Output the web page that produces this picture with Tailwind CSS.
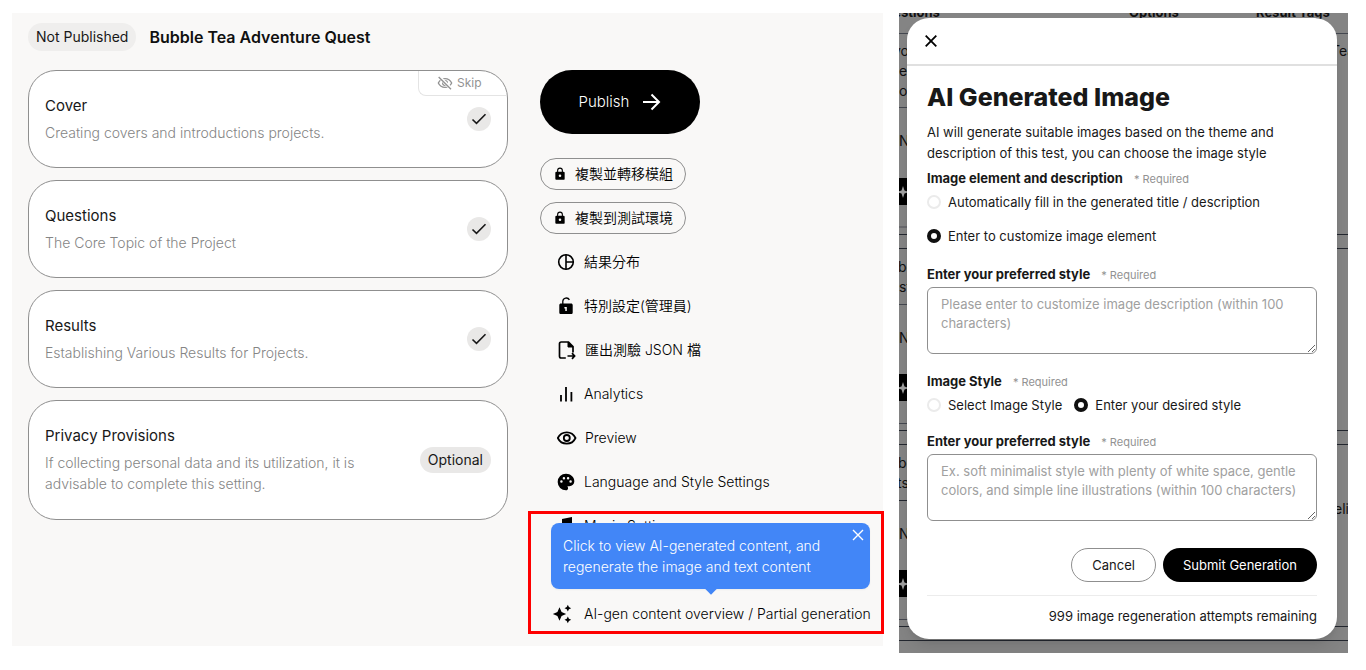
<!DOCTYPE html>
<html lang="en">
  <head>
    <meta charset="UTF-8" />
    <meta name="viewport" content="width=device-width, initial-scale=1.0" />
    <script src="https://cdn.jsdelivr.net/npm/@tailwindcss/browser@4"></script>
    <title>Bubble Tea Adventure Quest</title>
  </head>
  <body
    class="bg-white text-[#181818] text-sm font-[Inter,'Noto_Sans_CJK_TC',sans-serif]"
  >
    <div class="flex items-start gap-4 pt-[13px] pl-3 pr-[18px]">
      <!-- project overview -->
      <main class="relative flex-1 min-w-0 bg-[#f9f8f7] px-4 pt-[10px] h-[633px]">
        <header class="flex items-center gap-[13px] h-7">
          <span class="bg-[#efeeed] rounded-full px-2 leading-7">Not Published</span>
          <h1 class="text-base font-semibold text-[#101010]">Bubble Tea Adventure Quest</h1>
        </header>

        <div class="flex gap-8 mt-[19px]">
          <div class="flex flex-col gap-3 w-[480px] shrink-0">
            <section
              class="relative flex items-center justify-between bg-white border border-[#8f8f8f] rounded-[28px] px-4 h-[98px] overflow-hidden"
            >
              <div class="pb-[2px]">
                <h2 class="text-[15px] leading-6">Cover</h2>
                <p class="text-[#858585] font-light leading-[21px] mt-1">Creating covers and introductions projects.</p>
              </div>
              <button
                class="absolute top-0 right-0 flex items-center gap-1 w-[89px] h-[25px] pl-[18px] border-l border-b border-[#e4e4e4] rounded-bl-lg text-xs text-[#929292]"
              >
                <svg class="w-4 h-4" viewBox="0 0 24 24" fill="none" stroke="currentColor" stroke-width="2">
                  <path d="M2 12c2-4.200 5.500-6.500 10-6.500S20 7.800 22 12c-2 4.200-5.500 6.500-10 6.500S4 16.200 2 12z" />
                  <circle cx="12" cy="12" r="3.500" />
                  <path d="M3 2.500 21.500 21" stroke="#fff" stroke-width="5" />
                  <path d="M2.500 3 21 21.500" />
                </svg>
                Skip
              </button>
              <span class="flex items-center justify-center w-6 h-6 rounded-full bg-[#e9e8e7]">
                <svg class="w-4 h-4" viewBox="0 0 16 16" fill="none" stroke="#181818" stroke-width="1.600">
                  <path d="M1.500 8.500 5.500 12.300 14.500 3.300" />
                </svg>
              </span>
            </section>

            <section
              class="flex items-center justify-between bg-white border border-[#8f8f8f] rounded-[28px] px-4 h-[98px]"
            >
              <div class="pb-[2px]">
                <h2 class="text-[15px] leading-6">Questions</h2>
                <p class="text-[#858585] font-light leading-[21px] mt-1">The Core Topic of the Project</p>
              </div>
              <span class="flex items-center justify-center w-6 h-6 rounded-full bg-[#e9e8e7]">
                <svg class="w-4 h-4" viewBox="0 0 16 16" fill="none" stroke="#181818" stroke-width="1.600">
                  <path d="M1.500 8.500 5.500 12.300 14.500 3.300" />
                </svg>
              </span>
            </section>

            <section
              class="flex items-center justify-between bg-white border border-[#8f8f8f] rounded-[28px] px-4 h-[98px]"
            >
              <div class="pb-[2px]">
                <h2 class="text-[15px] leading-6">Results</h2>
                <p class="text-[#858585] font-light leading-[21px] mt-1">Establishing Various Results for Projects.</p>
              </div>
              <span class="flex items-center justify-center w-6 h-6 rounded-full bg-[#e9e8e7]">
                <svg class="w-4 h-4" viewBox="0 0 16 16" fill="none" stroke="#181818" stroke-width="1.600">
                  <path d="M1.500 8.500 5.500 12.300 14.500 3.300" />
                </svg>
              </span>
            </section>

            <section
              class="flex items-center justify-between bg-white border border-[#8f8f8f] rounded-[28px] px-4 h-[120px]"
            >
              <div class="w-[340px] pb-[2px]">
                <h2 class="text-[15px] leading-6">Privacy Provisions</h2>
                <p class="text-[#858585] font-light leading-[21px] mt-1">
                  If collecting personal data and its utilization, it is advisable to complete this setting.
                </p>
              </div>
              <span class="bg-[#e9e8e7] rounded-full px-2 leading-[26px]">Optional</span>
            </section>
          </div>

          <nav class="flex flex-col items-start gap-3 text-black font-[350] whitespace-nowrap">
            <button
              class="flex items-center justify-center gap-3 w-40 h-16 mb-3 rounded-full bg-black text-white text-[15px]"
            >
              Publish
              <svg class="w-5 h-5" viewBox="0 0 20 20" fill="none" stroke="currentColor" stroke-width="2">
                <path d="M2 10h15.500M10.500 2.500 18 10l-7.500 7.500" />
              </svg>
            </button>
            <button class="flex items-center gap-2 h-8 px-3 rounded-full border border-[#8f8f8f]">
              <svg class="w-[14px] h-[14px]" viewBox="0 0 24 24" fill="currentColor">
                <path d="M18 8h-1V6A5 5 0 0 0 7 6v2H6a2 2 0 0 0-2 2v10c0 1.100.9 2 2 2h12a2 2 0 0 0 2-2V10a2 2 0 0 0-2-2zm-6 9.300a2.200 2.200 0 1 1 0-4.400 2.200 2.200 0 0 1 0 4.400zM15.100 8H8.900V6a3.100 3.100 0 0 1 6.200 0v2z" />
              </svg>
              複製並轉移模組
            </button>
            <button class="flex items-center gap-2 h-8 px-3 rounded-full border border-[#8f8f8f]">
              <svg class="w-[14px] h-[14px]" viewBox="0 0 24 24" fill="currentColor">
                <path d="M18 8h-1V6A5 5 0 0 0 7 6v2H6a2 2 0 0 0-2 2v10c0 1.100.9 2 2 2h12a2 2 0 0 0 2-2V10a2 2 0 0 0-2-2zm-6 9.300a2.200 2.200 0 1 1 0-4.400 2.200 2.200 0 0 1 0 4.400zM15.100 8H8.900V6a3.100 3.100 0 0 1 6.200 0v2z" />
              </svg>
              複製到測試環境
            </button>
            <a href="#" class="flex items-center gap-2 h-8 pl-4">
              <svg class="w-5 h-5" viewBox="0 0 20 20" fill="none" stroke="currentColor" stroke-width="1.600">
                <circle cx="10" cy="10" r="7.300" />
                <path d="M10 2.500v15M10 10h7.500" />
              </svg>
              結果分布
            </a>
            <a href="#" class="flex items-center gap-2 h-8 pl-4">
              <svg class="w-5 h-5" viewBox="0 0 20 20" fill="none">
                <path d="M6.800 9V5.200a3.500 3.500 0 0 1 6.600-1.300" stroke="currentColor" stroke-width="1.300" />
                <path fill="currentColor" fill-rule="evenodd" d="M4.900 7.500h10.200c.9 0 1.600.7 1.600 1.600v7.300c0 .9-.7 1.600-1.600 1.600H4.900c-.9 0-1.600-.7-1.600-1.600V9.100c0-.9.7-1.600 1.600-1.600zM8.400 11v1.400h.9V15h1.500v-4z" />
              </svg>
              特別設定(管理員)
            </a>
            <a href="#" class="flex items-center gap-2 h-8 pl-[17px]">
              <svg class="w-5 h-5" viewBox="0 0 20 20" fill="none" stroke="currentColor" stroke-width="1.700">
                <path d="M8.800 18H4.200a1.700 1.700 0 0 1-1.700-1.700V3.700C2.500 2.800 3.300 2 4.200 2h7.300L16 6.500v6" />
                <path d="M11 2v5h5z" fill="currentColor" stroke-width="1" />
                <path d="M10.500 16h7M15 13.200l2.600 2.800-2.600 2.800" />
              </svg>
              匯出測驗 JSON 檔
            </a>
            <a href="#" class="flex items-center gap-2 h-8 pl-4">
              <svg class="w-5 h-5" viewBox="0 0 20 20" fill="none" stroke="currentColor" stroke-width="1.800">
                <path d="M5 11v6.500M10 3v14.500M15.400 8v9.500" />
              </svg>
              Analytics
            </a>
            <a href="#" class="flex items-center gap-2 h-8 pl-[17px]">
              <svg class="w-5 h-5" viewBox="0 0 20 20" fill="none" stroke="currentColor" stroke-width="1.800">
                <path d="M.8 10c1.700-3.600 5-5.700 9-5.700s7 2.100 8.700 5.700c-1.700 3.600-4.700 5.700-8.700 5.700S2.500 13.600.8 10z" />
                <circle cx="9.800" cy="10" r="3" />
              </svg>
              Preview
            </a>
            <a href="#" class="flex items-center gap-2 h-8 pl-4">
              <svg class="w-5 h-5" viewBox="0 0 24 24" fill="currentColor">
                <path d="M12 2a10 10 0 1 0 0 20c1.400 0 2.500-1.100 2.500-2.500 0-.6-.2-1.200-.6-1.700-.1-.1-.1-.2-.1-.3 0-.3.200-.5.500-.5H16a6 6 0 0 0 6-6C22 6 17.500 2 12 2zM6.500 13a1.500 1.500 0 1 1 0-3 1.500 1.500 0 0 1 0 3zm3-4a1.500 1.500 0 1 1 0-3 1.500 1.500 0 0 1 0 3zm5 0a1.500 1.500 0 1 1 0-3 1.500 1.500 0 0 1 0 3zm3 4a1.500 1.500 0 1 1 0-3 1.500 1.500 0 0 1 0 3z" />
              </svg>
              Language and Style Settings
            </a>
            <a href="#" class="flex items-center gap-2 h-8 pl-4">
              <svg class="w-5 h-5" viewBox="0 0 20 20" fill="currentColor">
                <path d="M6 3l10-2v12.500a2.700 2.700 0 1 1-2-2.500V7L8 8.200v7.300A2.700 2.700 0 1 1 6 13z" />
              </svg>
              Music Settings
            </a>
            <div class="relative mt-11">
              <a href="#" class="flex items-center gap-3 h-8 pl-3">
                <svg class="w-5 h-5" viewBox="0 0 24 24" fill="currentColor">
                  <path d="m19 9 1.300-2.700L23 5l-2.700-1.300L19 1l-1.300 2.700L15 5l2.700 1.300zM19 15l-1.300 2.700L15 19l2.700 1.300L19 23l1.300-2.700L23 19l-2.700-1.300zM11.500 9.500 9 4 6.500 9.500 1 12l5.500 2.500L9 20l2.500-5.500L17 12z" />
                </svg>
                AI-gen content overview / Partial generation
              </a>
              <div
                role="tooltip"
                class="absolute bottom-[41px] left-[11px] w-[319px] h-[66px] bg-[#4286f7] text-white rounded-lg px-3 py-3 font-light leading-[21px] whitespace-normal shadow-xs"
              >
                <p>Click to view AI-generated content, and regenerate the image and text content</p>
                <button aria-label="Dismiss" class="absolute top-[6px] right-[6px]">
                  <svg class="w-3 h-3" viewBox="0 0 12 12" fill="none" stroke="currentColor" stroke-width="1.400">
                    <path d="M1 1l10 10M11 1 1 11" />
                  </svg>
                </button>
                <span class="absolute -bottom-1 left-1/2 w-2 h-2 -ml-1 rotate-45 bg-[#4286f7]"></span>
              </div>
            </div>
          </nav>
        </div>

        <!-- highlight frame -->
        <div class="absolute -right-px bottom-3 w-[356px] h-[123px] border-3 border-[#fe0000] pointer-events-none"></div>
      </main>

      <!-- image generation dialog over the dimmed question table -->
      <aside class="relative w-[449px] shrink-0 h-[640px] bg-[#848484] overflow-hidden">
        <div aria-hidden="true" class="absolute inset-0 text-[#101010] leading-5 whitespace-nowrap">
          <div class="relative h-[21px] border-b border-[#44474f] text-[13px] font-bold leading-4 overflow-hidden">
            <span class="absolute -top-[9px] -left-6">Questions</span>
            <span class="absolute -top-[9px] left-[230px]">Options</span>
            <span class="absolute -top-[9px] left-[357px]">Result Tags</span>
          </div>
          <div class="flex justify-between h-[201px] border-b border-[#23272f] mb-[13px]">
            <div class="w-10 h-[194px] border-b-2 border-[#6a6a6e]">
              <div class="h-[74px] pt-[7px] border-b border-[#44474f]">
                <p class="-ml-[6px]">you</p>
                <p>er</p>
                <p>of</p>
              </div>
              <div class="h-[70px] pt-[23px]">N</div>
              <div class="flex items-center h-[27px] bg-black">
                <svg class="w-3 h-3 -ml-[2px]" viewBox="0 0 12 12" fill="#a0a0a0"><path d="M6 0l1.500 4.500L12 6 7.500 7.500 6 12 4.500 7.500 0 6l4.500-1.500z" /></svg>
              </div>
            </div>
            <p class="w-[17px] pt-[7px]">Tea</p>
          </div>
          <div class="flex justify-between h-[183px] border-y border-[#23272f] mb-[13px]">
            <div class="w-10 h-[175px] border-b border-[#44474f]">
              <div class="h-[56px] pt-[8px] border-b border-[#44474f]">
                <p class="-ml-px">bo</p>
                <p>st</p>
              </div>
              <div class="h-[69px] pt-[23px]">N</div>
              <div class="flex items-center h-[27px] bg-black">
                <svg class="w-3 h-3 -ml-[2px]" viewBox="0 0 12 12" fill="#a0a0a0"><path d="M6 0l1.500 4.500L12 6 7.500 7.500 6 12 4.500 7.500 0 6l4.500-1.500z" /></svg>
              </div>
            </div>
          </div>
          <div class="flex justify-between h-[183px] border-y border-[#23272f] mb-[13px]">
            <div class="w-10 h-[175px] border-b border-[#44474f]">
              <div class="h-[56px] pt-[8px] border-b border-[#23272f]">
                <p class="-ml-px">bo</p>
                <p class="-ml-[2px]">ts</p>
              </div>
              <div class="h-[69px] pt-[23px]">N</div>
              <div class="flex items-center h-[27px] bg-black">
                <svg class="w-3 h-3 -ml-[2px]" viewBox="0 0 12 12" fill="#a0a0a0"><path d="M6 0l1.500 4.500L12 6 7.500 7.500 6 12 4.500 7.500 0 6l4.500-1.500z" /></svg>
              </div>
            </div>
            <p class="w-[14px] pt-[54px]">eli</p>
          </div>
          <div class="border-t border-[#23272f]"></div>
        </div>

        <div
          role="dialog"
          aria-labelledby="dialogTitle"
          class="relative mt-[5px] ml-2 mr-[11px] h-[621px] bg-white rounded-[22px] shadow-lg"
        >
          <div class="flex items-center h-12 px-[18px] border-b-2 border-[#e0e0e0]">
            <button aria-label="Close">
              <svg class="w-3 h-3" viewBox="0 0 12 12" fill="none" stroke="#000" stroke-width="1.800">
                <path d="M.7.7l10.600 10.600M11.300.7.7 11.300" />
              </svg>
            </button>
          </div>
          <form class="px-5 pt-[15px]">
            <h2 id="dialogTitle" class="text-[25px] font-extrabold leading-8">AI Generated Image</h2>
            <p class="text-[13px] leading-[21px] mt-[9px] w-[360px]">
              AI will generate suitable images based on the theme and description of this test, you can choose the
              image style
            </p>

            <fieldset class="text-[13px] mt-1">
              <legend class="font-bold leading-5">
                Image element and description
                <span class="text-[11px] font-normal text-[#929292] ml-2">* Required</span>
              </legend>
              <label class="flex items-center gap-[7px] h-[26px]">
                <input type="radio" name="element" class="appearance-none w-[14px] h-[14px] rounded-full border-2 border-[#ebebeb] checked:border-4 checked:border-[#101010]" />
                Automatically fill in the generated title / description
              </label>
              <label class="flex items-center gap-[7px] h-[26px] mt-2">
                <input type="radio" name="element" checked class="appearance-none w-[14px] h-[14px] rounded-full border-2 border-[#ebebeb] checked:border-4 checked:border-[#101010]" />
                Enter to customize image element
              </label>
            </fieldset>

            <label for="elementText" class="block text-[13px] font-bold leading-5 mt-[15px]">
              Enter your preferred style
              <span class="text-[11px] font-normal text-[#929292] ml-2">* Required</span>
            </label>
            <textarea
              id="elementText"
              class="block w-full h-[67px] mt-[2px] px-[13px] py-[7px] border border-[#8f8f8f] rounded-md text-[13px] leading-[19px] placeholder:text-[#a0a0a0]"
              placeholder="Please enter to customize image description (within 100 characters)"
            ></textarea>

            <fieldset class="text-[13px] mt-[17px]">
              <legend class="font-bold leading-5">
                Image Style
                <span class="text-[11px] font-normal text-[#929292] ml-2">* Required</span>
              </legend>
              <div class="flex gap-3">
                <label class="flex items-center gap-[7px] h-[26px]">
                  <input type="radio" name="style" class="appearance-none w-[14px] h-[14px] rounded-full border-2 border-[#ebebeb] checked:border-4 checked:border-[#101010]" />
                  Select Image Style
                </label>
                <label class="flex items-center gap-[7px] h-[26px]">
                  <input type="radio" name="style" checked class="appearance-none w-[14px] h-[14px] rounded-full border-2 border-[#ebebeb] checked:border-4 checked:border-[#101010]" />
                  Enter your desired style
                </label>
              </div>
            </fieldset>

            <label for="styleText" class="block text-[13px] font-bold leading-5 mt-[13px]">
              Enter your preferred style
              <span class="text-[11px] font-normal text-[#929292] ml-2">* Required</span>
            </label>
            <textarea
              id="styleText"
              class="block w-full h-[67px] mt-[2px] px-[13px] py-[7px] border border-[#8f8f8f] rounded-md text-[13px] leading-[19px] placeholder:text-[#a0a0a0]"
              placeholder="Ex. soft minimalist style with plenty of white space, gentle colors, and simple line illustrations (within 100 characters)"
            ></textarea>

            <div class="flex justify-end gap-[7px] mt-[27px] text-[13px]">
              <button type="button" class="h-[34px] px-5 rounded-full border border-[#8f8f8f]">Cancel</button>
              <button type="submit" class="h-[34px] px-5 rounded-full bg-black text-white">Submit Generation</button>
            </div>
            <p class="mt-[13px] pt-[10px] border-t border-[#ececec] text-right text-[13px] leading-5">
              999 image regeneration attempts remaining
            </p>
          </form>
        </div>
      </aside>
    </div>
  </body>
</html>
